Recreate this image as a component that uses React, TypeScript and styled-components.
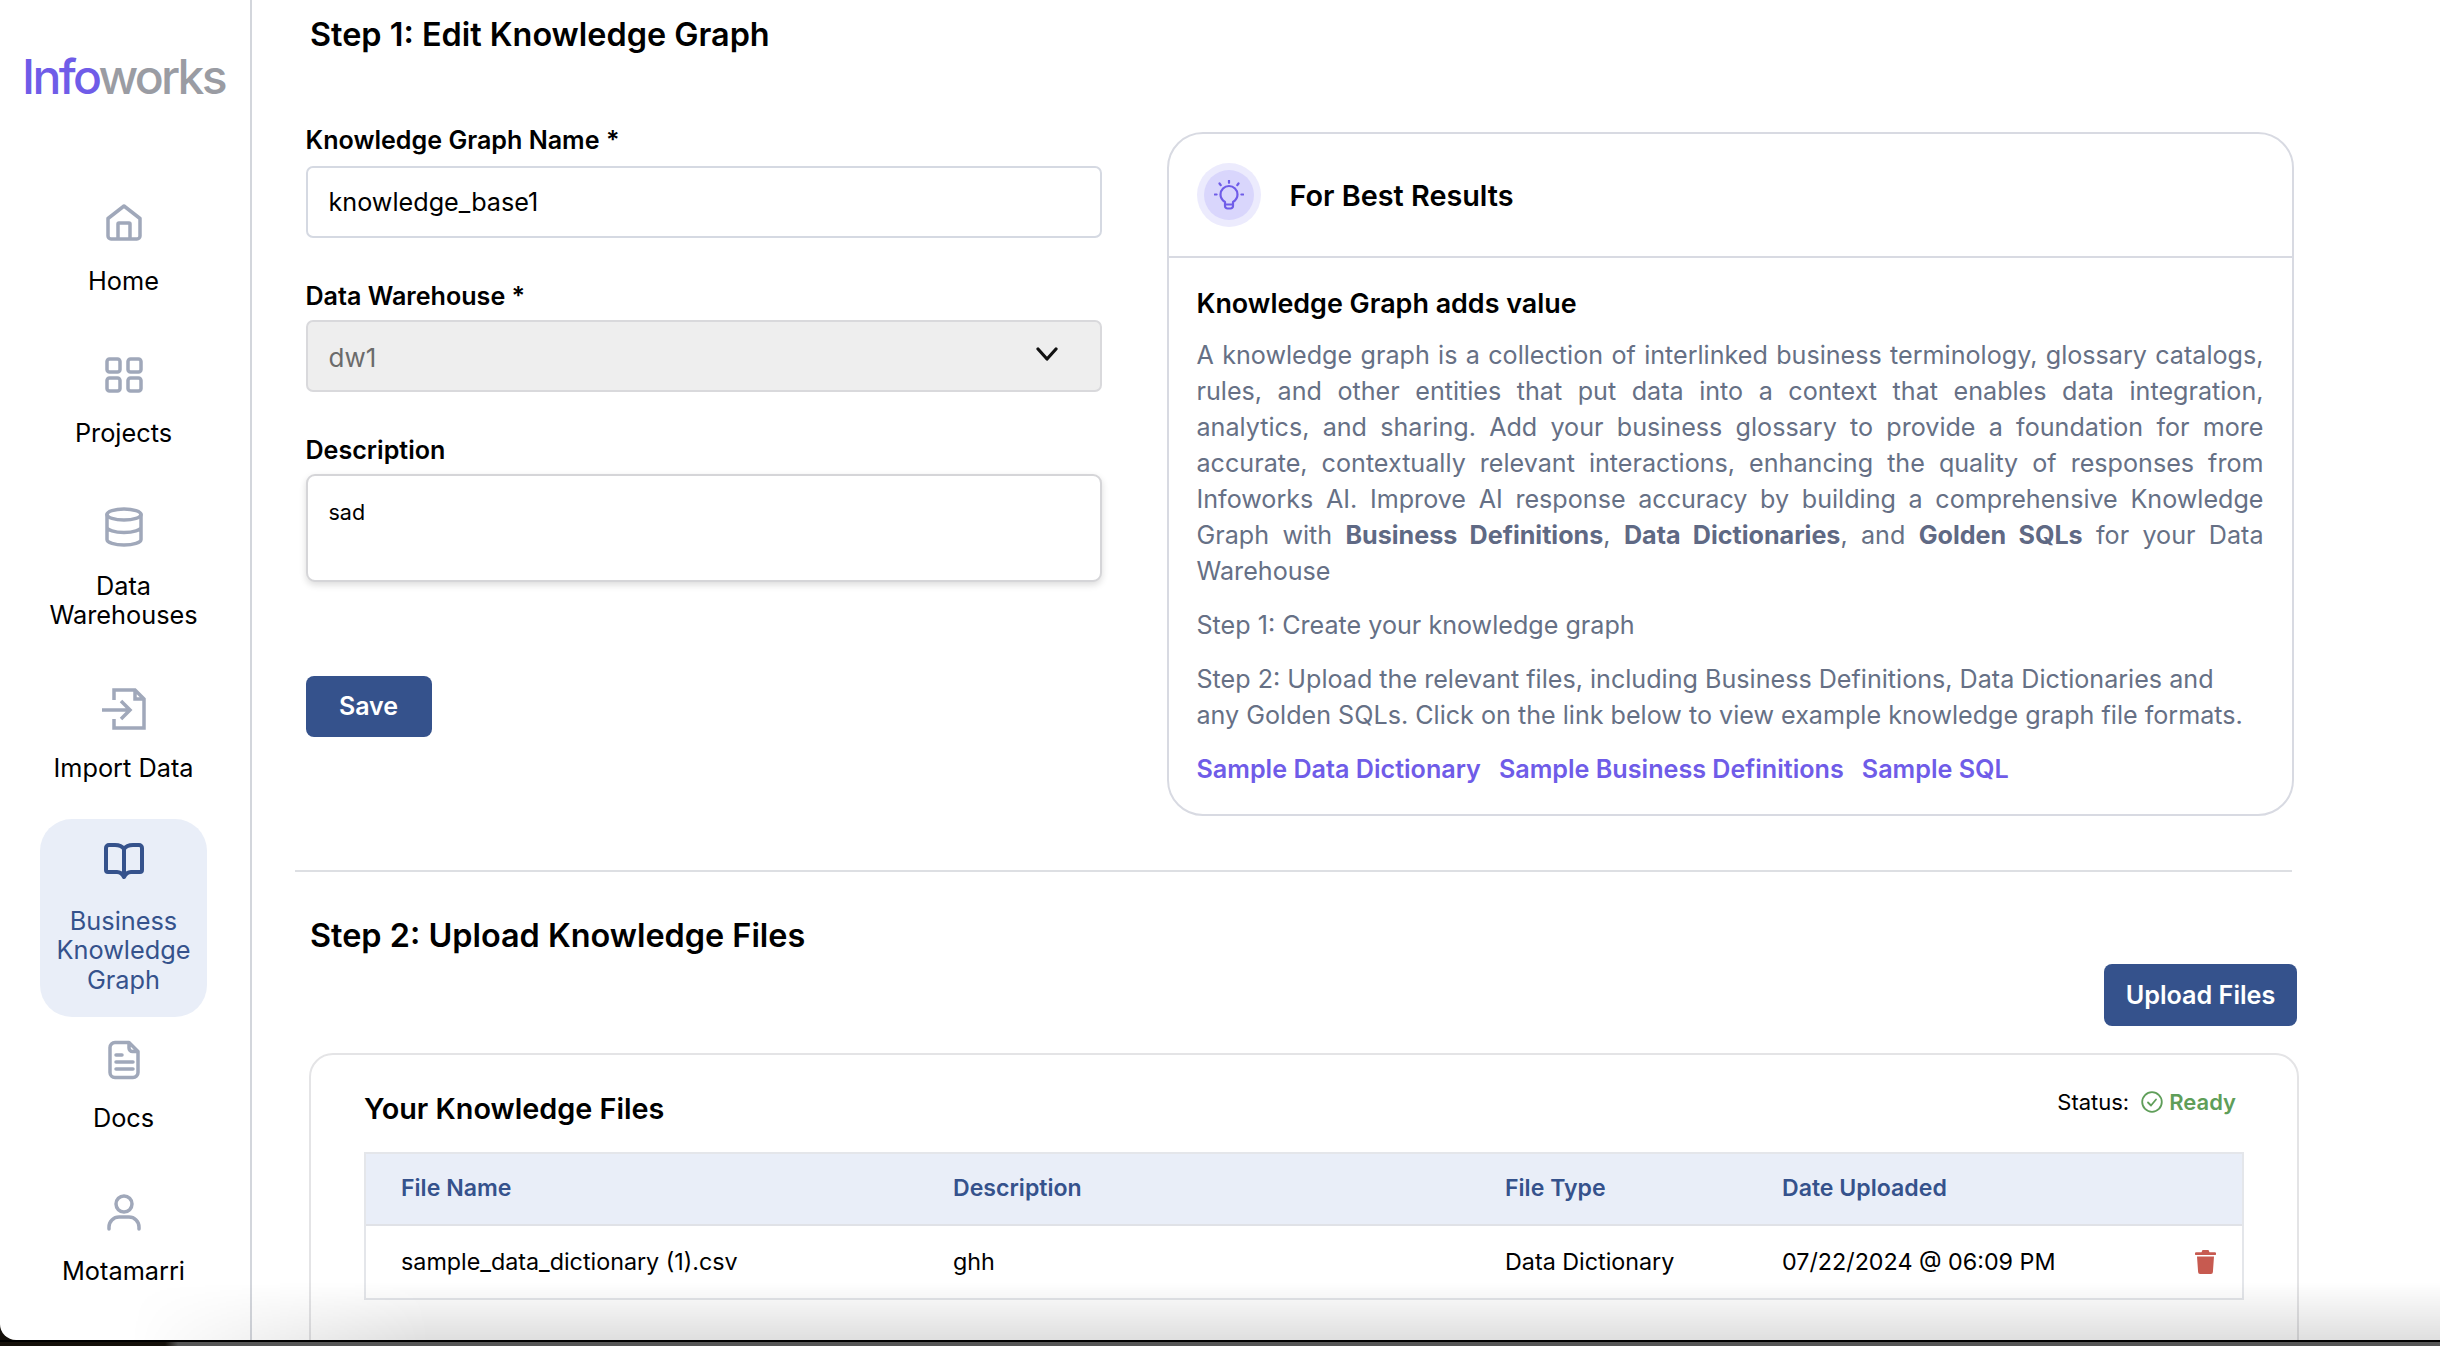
import React from "react";
import styled, { createGlobalStyle } from "styled-components";

const Global = createGlobalStyle`
  html, body { margin: 0; padding: 0; height: 100%; background: #15100a; }
  body { font-family: Inter, "Liberation Sans", sans-serif; overflow: hidden; }
  * { box-sizing: border-box; }
`;

const Page = styled.div`
  width: 2440px;
  height: 1346px;
  display: flex;
  flex-direction: column;
  overflow: hidden;
`;
const Win = styled.div`
  position: relative;
  flex: none;
  height: 1340px;
  display: flex;
  background: #fff;
  overflow: hidden;
  border-bottom-left-radius: 16px;
`;
const DeskStrip = styled.div`
  flex: 1;
  border-top: 2px solid #000;
  background: linear-gradient(90deg, #15100a 165px, #555 178px);
`;
const BottomShade = styled.div`
  position: absolute;
  left: 0;
  right: 0;
  bottom: 0;
  height: 58px;
  pointer-events: none;
  background: linear-gradient(180deg, rgba(0, 0, 0, 0), rgba(0, 0, 0, 0.125));
  mask-image: linear-gradient(90deg, transparent 130px, #000 430px);
`;

const Sidebar = styled.aside`
  flex: none;
  width: 252px;
  border-right: 2px solid #d3d6dc;
  display: flex;
  flex-direction: column;
  align-items: center;
  padding: 42px 3px 0 0;
`;
const Logo = styled.div`
  height: 70px;
  margin-bottom: 67px;
  font-size: 48px;
  line-height: 70px;
  font-weight: 550;
  letter-spacing: -2.7px;
  color: #9a9ca3;
  white-space: nowrap;
`;
const LogoAccent = styled.span`
  color: #6f5ce8;
`;
const NavItem = styled.div<{ $active?: boolean }>`
  width: 167px;
  display: flex;
  flex-direction: column;
  align-items: center;
  padding: 15px 0 22.3px;
  margin-bottom: ${(p) => (p.$active ? "0" : "14px")};
  border-radius: 32px;
  background: ${(p) => (p.$active ? "#e9eef8" : "transparent")};
  color: ${(p) => (p.$active ? "#35528c" : "#000")};
`;
const NavIconBox = styled.div`
  height: 56px;
  display: flex;
  align-items: center;
  justify-content: center;
`;
const NavLabel = styled.div`
  margin-top: 15.7px;
  width: 167px;
  text-align: center;
  font-size: 25.3px;
  line-height: 29.6px;
  font-weight: 400;
`;
const NavSvg = styled.svg<{ $active?: boolean; $square?: boolean }>`
  display: block;
  fill: none;
  stroke: ${(p) => (p.$active ? "#35528c" : "#a0a8ba")};
  stroke-width: ${(p) => (p.$active ? 4 : 3.5)};
  stroke-linecap: ${(p) => (p.$square ? "butt" : "round")};
  stroke-linejoin: ${(p) => (p.$square ? "miter" : "round")};
`;

const Main = styled.main`
  flex: 1;
  min-width: 0;
  padding: 15px 0 0 43px;
  overflow: hidden;
`;
const Heading = styled.h1<{ $gapTop?: number }>`
  margin: ${(p) => p.$gapTop ?? 0}px 0 0 15px;
  font-size: 32.4px;
  line-height: 40px;
  font-weight: 600;
  color: #000;
`;
const StepRow = styled.div`
  display: flex;
  align-items: flex-start;
  margin-top: 70px;
  padding-left: 10.5px;
`;
const FormCol = styled.form`
  flex: none;
  width: 796.5px;
  margin-right: 64.5px;
  display: flex;
  flex-direction: column;
`;
const Field = styled.label`
  display: block;
  margin-bottom: 43px;
`;
const FieldLabel = styled.div<{ $gap: number }>`
  font-size: 25.1px;
  line-height: 30px;
  font-weight: 600;
  color: #000;
  margin-bottom: ${(p) => p.$gap}px;
`;
const TextInput = styled.input`
  display: block;
  width: 100%;
  height: 72px;
  border: 2px solid #d5d9e2;
  border-radius: 7px;
  padding: 0 21px;
  font: 400 25.2px Inter, sans-serif;
  color: #000;
  background: #fff;
  outline: none;
`;
const SelectBox = styled.div`
  width: 100%;
  height: 72px;
  border: 2px solid #d9d9dc;
  border-radius: 7px;
  padding: 2px 41px 0 21px;
  display: flex;
  align-items: center;
  justify-content: space-between;
  font-size: 26px;
  background: #eeeeee;
  color: #6b6b6b;
`;
const Chevron = styled.svg`
  display: block;
  margin-top: -6px;
  fill: none;
  stroke: #111;
  stroke-width: 3.2;
  stroke-linecap: round;
  stroke-linejoin: round;
`;
const TextArea = styled.textarea`
  display: block;
  width: 100%;
  height: 108px;
  resize: none;
  border: 2px solid #d5d5d8;
  border-radius: 9px;
  padding: 22px 21px;
  font: 400 21.5px/28px Inter, sans-serif;
  color: #000;
  background: #fff;
  outline: none;
  box-shadow: 0 3px 7px rgba(0, 0, 0, 0.14);
`;
const SaveButton = styled.button`
  width: 126px;
  height: 61px;
  margin-top: 51px;
  padding: 0 0 2px;
  border: none;
  border-radius: 8px;
  background: #35528c;
  color: #fff;
  font: 600 25px Inter, sans-serif;
`;

const InfoCard = styled.section`
  flex: none;
  width: 1127px;
  height: 684px;
  margin-top: 7px;
  border: 2px solid #d8dae2;
  border-radius: 36px;
`;
const InfoHead = styled.header`
  height: 124px;
  padding: 0 0 0 28px;
  border-bottom: 2px solid #d8dae2;
  display: flex;
  align-items: center;
  gap: 29px;
`;
const BulbHalo = styled.div`
  width: 64px;
  height: 64px;
  border-radius: 50%;
  background: #ecebfd;
  display: flex;
  align-items: center;
  justify-content: center;
`;
const BulbCore = styled.div`
  width: 50px;
  height: 50px;
  border-radius: 50%;
  background: #d9d6fc;
  display: flex;
  align-items: center;
  justify-content: center;
`;
const InfoTitle = styled.h2`
  margin: 0;
  font-size: 28.8px;
  font-weight: 600;
  color: #000;
`;
const InfoBody = styled.div`
  padding: 27px 28px 0 28px;
`;
const InfoSub = styled.h3`
  margin: 0 0 16px;
  font-size: 26.9px;
  line-height: 36px;
  font-weight: 600;
  color: #000;
`;
const Para = styled.p<{ $justify?: boolean }>`
  margin: 0 0 18px;
  font-size: 25.13px;
  line-height: 36px;
  color: #667085;
  text-align: ${(p) => (p.$justify ? "justify" : "left")};
`;
const Strong = styled.strong`
  font-weight: 700;
  color: #5f6984;
`;
const LinkRow = styled.div`
  display: flex;
  gap: 18px;
`;
const SampleLink = styled.a`
  font-size: 25.15px;
  line-height: 36px;
  font-weight: 600;
  color: #6f5ce8;
`;
const Divider = styled.hr`
  width: 1997px;
  height: 2px;
  margin: 54px 0 0;
  border: none;
  background: #dddfe3;
`;
const UploadRow = styled.div`
  display: flex;
  justify-content: flex-end;
  margin-top: 8px;
  width: 2002px;
`;
const UploadButton = styled.button`
  width: 193px;
  height: 62px;
  border: none;
  border-radius: 8px;
  background: #35528c;
  color: #fff;
  font: 600 25.2px Inter, sans-serif;
`;
const FilesCard = styled.section`
  width: 1990px;
  min-height: 400px;
  margin: 27px 0 0 14px;
  padding: 35px 53px 0 53px;
  border: 2px solid #e4e4e6;
  border-radius: 24px;
`;
const FilesHead = styled.header`
  display: flex;
  justify-content: space-between;
  align-items: flex-start;
  height: 62px;
`;
const FilesTitle = styled.h3`
  margin: 0;
  font-size: 28.8px;
  line-height: 38px;
  font-weight: 600;
  color: #000;
`;
const StatusWrap = styled.div`
  display: flex;
  align-items: center;
  margin: -5px 8px 0 0;
  font-size: 22px;
  line-height: 34px;
  color: #000;
`;
const ReadyText = styled.span`
  margin-left: 6px;
  font-weight: 600;
  color: #5f9e59;
`;
const CheckSvg = styled.svg`
  display: block;
  margin-left: 12px;
  fill: none;
  stroke: #5f9e59;
  stroke-width: 1.8;
  stroke-linecap: round;
  stroke-linejoin: round;
`;
const FileGrid = styled.div`
  border: 2px solid #e4e6ea;
`;
const GridRow = styled.div<{ $head?: boolean }>`
  display: grid;
  grid-template-columns: 552px 552px 277px 1fr 47px;
  align-items: center;
  height: 72px;
  padding: ${(p) => (p.$head ? "0 0 3px 35px" : "0 0 1px 35px")};
  background: ${(p) => (p.$head ? "#e9eef8" : "transparent")};
  color: ${(p) => (p.$head ? "#35528c" : "#000")};
  font-size: ${(p) => (p.$head ? "23.1px" : "23.3px")};
  font-weight: ${(p) => (p.$head ? 600 : 400)};
  border-bottom: ${(p) => (p.$head ? "2px solid #e0e2e7" : "none")};
`;
const TrashSvg = styled.svg`
  display: block;
  fill: #c75a50;
`;

const NAV_ICONS: Record<string, React.ReactNode> = {
  home: (
    <NavSvg width={38} height={38} viewBox="0 0 38 38">
      <path d="M3 15.5 19 3l16 12.5V33a3 3 0 0 1-3 3H6a3 3 0 0 1-3-3ZM13 36V21a1 1 0 0 1 1-1h10a1 1 0 0 1 1 1v15" />
    </NavSvg>
  ),
  grid: (
    <NavSvg width={38} height={36} viewBox="0 0 38 36">
      <rect x="2" y="2" width="13" height="13" rx="2.5" />
      <rect x="23" y="2" width="13" height="13" rx="2.5" />
      <rect x="2" y="21" width="13" height="13" rx="2.5" />
      <rect x="23" y="21" width="13" height="13" rx="2.5" />
    </NavSvg>
  ),
  db: (
    <NavSvg width={38} height={40} viewBox="0 0 38 40">
      <ellipse cx="19" cy="7.5" rx="17" ry="5.5" />
      <path d="M2 7.5v25c0 3 7.6 5.5 17 5.5s17-2.500 17-5.500v-25M2 20c0 3 7.600 5.500 17 5.500S36 23 36 20" />
    </NavSvg>
  ),
  import: (
    <NavSvg $square width={44} height={42} viewBox="0 0 44 42">
      <path d="M12 12V2h21l9 9v29H12v-9M33 2v9h9M0 22h28M19 13l9 9-9 9" />
    </NavSvg>
  ),
  book: (
    <NavSvg $active width={40} height={37} viewBox="0 0 40 37">
      <path d="M20 6c-2-3-5-4-9-4H5a3 3 0 0 0-3 3v22a2 2 0 0 0 2 2h9c3 0 5 1 7 5 2-4 4-5 7-5h9a2 2 0 0 0 2-2V5a3 3 0 0 0-3-3h-6c-4 0-7 1-9 4ZM20 6v28" />
    </NavSvg>
  ),
  doc: (
    <NavSvg width={34} height={40} viewBox="0 0 34 40">
      <path d="M22 2.500H8a5 5 0 0 0-5 5v25a5 5 0 0 0 5 5h18a5 5 0 0 0 5-5v-21ZM22 2.500V8a3.500 3.500 0 0 0 3.500 3.500H31M9 15h6M9 22h17M9 29h17" />
    </NavSvg>
  ),
  user: (
    <NavSvg width={36} height={37} viewBox="0 0 36 37">
      <circle cx="18" cy="10" r="8" />
      <path d="M3 35v-2a10 10 0 0 1 10-10h10a10 10 0 0 1 10 10v2" />
    </NavSvg>
  ),
};

const NAV = [
  { key: "home", label: "Home" },
  { key: "grid", label: "Projects" },
  { key: "db", label: "Data Warehouses" },
  { key: "import", label: "Import Data" },
  { key: "book", label: "Business Knowledge Graph", active: true },
  { key: "doc", label: "Docs" },
  { key: "user", label: "Motamarri" },
];

export default function App() {
  return (
    <Page>
      <Global />
      <Win>
        <Sidebar>
          <Logo>
            <LogoAccent>Info</LogoAccent>works
          </Logo>
          {NAV.map((n) => (
            <NavItem key={n.key} $active={n.active}>
              <NavIconBox>{NAV_ICONS[n.key]}</NavIconBox>
              <NavLabel>{n.key === "db" ? <>Data<br />Warehouses</> : n.key === "book" ? <>Business<br />Knowledge<br />Graph</> : n.label}</NavLabel>
            </NavItem>
          ))}
        </Sidebar>
        <Main>
          <Heading>Step 1: Edit Knowledge Graph</Heading>
          <StepRow>
            <FormCol>
              <Field>
                <FieldLabel $gap={11}>Knowledge Graph Name *</FieldLabel>
                <TextInput readOnly value="knowledge_base1" />
              </Field>
              <Field>
                <FieldLabel $gap={9}>Data Warehouse *</FieldLabel>
                <SelectBox>
                  dw1
                  <Chevron width={24} height={14} viewBox="0 0 24 14">
                    <path d="M3 2l9 10 9-10" />
                  </Chevron>
                </SelectBox>
              </Field>
              <Field>
                <FieldLabel $gap={9}>Description</FieldLabel>
                <TextArea readOnly value="sad" />
              </Field>
              <SaveButton type="button">Save</SaveButton>
            </FormCol>
            <InfoCard>
              <InfoHead>
                <BulbHalo>
                  <BulbCore>
                    <svg width="30" height="30" viewBox="0 0 30 30" fill="none" stroke="#6f5ce8" strokeWidth="2.2" strokeLinecap="round" strokeLinejoin="round">
                      <path d="M11 22c-3-2-4.500-4.500-4.500-7.500a8.500 8.500 0 0 1 17 0c0 3-1.500 5.500-4.500 7.500v4a2.500 2.500 0 0 1-2.500 2.500h-3A2.500 2.500 0 0 1 11 26ZM11 24.500h8M15 .8v2M5.500 3.500l1.200 1.700M24.500 3.500l-1.200 1.700M.8 14.500h1.800M27.400 14.500h1.800" />
                    </svg>
                  </BulbCore>
                </BulbHalo>
                <InfoTitle>For Best Results</InfoTitle>
              </InfoHead>
              <InfoBody>
                <InfoSub>Knowledge Graph adds value</InfoSub>
                <Para $justify>
                  A knowledge graph is a collection of interlinked business terminology, glossary catalogs, rules, and other entities that put data into a context that enables data integration, analytics, and sharing. Add your business glossary to provide a foundation for more accurate, contextually relevant interactions, enhancing the quality of responses from Infoworks AI. Improve AI response accuracy by building a comprehensive Knowledge Graph with <Strong>Business Definitions</Strong>, <Strong>Data Dictionaries</Strong>, and <Strong>Golden SQLs</Strong> for your Data Warehouse
                </Para>
                <Para>Step 1: Create your knowledge graph</Para>
                <Para>
                  Step 2: Upload the relevant files, including Business Definitions, Data Dictionaries and
                  <br />
                  any Golden SQLs. Click on the link below to view example knowledge graph file formats.
                </Para>
                <LinkRow>
                  <SampleLink>Sample Data Dictionary</SampleLink>
                  <SampleLink>Sample Business Definitions</SampleLink>
                  <SampleLink>Sample SQL</SampleLink>
                </LinkRow>
              </InfoBody>
            </InfoCard>
          </StepRow>
          <Divider />
          <Heading as="h2" $gapTop={44}>Step 2: Upload Knowledge Files</Heading>
          <UploadRow>
            <UploadButton type="button">Upload Files</UploadButton>
          </UploadRow>
          <FilesCard>
            <FilesHead>
              <FilesTitle>Your Knowledge Files</FilesTitle>
              <StatusWrap>
                Status:
                <CheckSvg width={22} height={22} viewBox="0 0 22 22">
                  <circle cx="11" cy="11" r="9.800" />
                  <path d="M7 11.500l3 3 5-6" />
                </CheckSvg>
                <ReadyText>Ready</ReadyText>
              </StatusWrap>
            </FilesHead>
            <FileGrid>
              <GridRow $head>
                <span>File Name</span>
                <span>Description</span>
                <span>File Type</span>
                <span>Date Uploaded</span>
                <span />
              </GridRow>
              <GridRow>
                <span>sample_data_dictionary (1).csv</span>
                <span>ghh</span>
                <span>Data Dictionary</span>
                <span>07/22/2024 @ 06:09 PM</span>
                <TrashSvg width={21} height={24} viewBox="0 0 21 24">
                  <path d="M7.500 0h6l1 2.200h5.300a1.100 1.100 0 0 1 0 2.800H1.200a1.100 1.100 0 0 1 0-2.800h5.300ZM2 6.500h17l-1.100 15.500a2 2 0 0 1-2 2H5.100a2 2 0 0 1-2-2Z" />
                </TrashSvg>
              </GridRow>
            </FileGrid>
          </FilesCard>
        </Main>
        <BottomShade />
      </Win>
      <DeskStrip />
    </Page>
  );
}
